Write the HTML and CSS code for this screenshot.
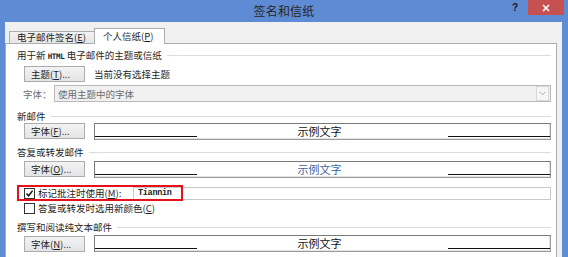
FILE: index.html
```html
<!DOCTYPE html>
<html lang="zh-CN">
<head>
<meta charset="utf-8">
<title>签名和信纸</title>
<link rel="stylesheet" href="styles.css">
</head>
<body>
<div class="titlebar">
  <div></div>
  <div class="title">签名和信纸</div>
  <div class="ctrls">
    <span class="help">?</span>
    <span class="close"><svg width="8" height="8" viewBox="0 0 8 8"><path d="M1 1L7 7M7 1L1 7" stroke="#fff" stroke-width="1.6" fill="none"/></svg></span>
  </div>
</div>
<div class="client">
  <div class="tabs">
    <div class="tab">电子邮件签名(<u>E</u>)</div>
    <div class="tab sel">个人信纸(<u>P</u>)</div>
  </div>
  <div class="panel">
    <div class="grp g1"><span>用于新 <span class="mini">HTML</span> 电子邮件的主题或信纸</span></div>
    <div class="row r-theme">
      <div class="btn">主题(<u>T</u>)...</div>
      <span class="note">当前没有选择主题</span>
    </div>
    <div class="row r-font">
      <span class="dis-label">字体：</span>
      <div class="combo"><span>使用主题中的字体</span><span class="arrow"><svg width="7" height="5" viewBox="0 0 7 5"><path d="M0.5 0.8L3.5 3.8L6.5 0.8" stroke="#a8a8a8" fill="none"/></svg></span></div>
    </div>
    <div class="grp g2"><span>新邮件</span></div>
    <div class="row r-f">
      <div class="btn">字体(<u>F</u>)...</div>
      <div class="sample"><span class="ln"></span><span class="txt">示例文字</span><span class="ln"></span></div>
    </div>
    <div class="grp g3"><span>答复或转发邮件</span></div>
    <div class="row r-o">
      <div class="btn">字体(<u>O</u>)...</div>
      <div class="sample blue"><span class="ln"></span><span class="txt">示例文字</span><span class="ln"></span></div>
    </div>
    <div class="chk-row c1">
      <span class="cb on"><svg width="9" height="9" viewBox="0 0 9 9"><path d="M1.5 4.5L3.6 6.8L7.6 1.6" stroke="#111" stroke-width="1.5" fill="none"/></svg></span>
      <span class="cb-label w1">标记批注时使用(<u>M</u>):</span>
      <div class="field">Tiannin</div>
      <span class="mark"></span>
    </div>
    <div class="chk-row c2">
      <span class="cb"></span>
      <span class="cb-label">答复或转发时选用新颜色(<u>C</u>)</span>
    </div>
    <div class="grp g4"><span>撰写和阅读纯文本邮件</span></div>
    <div class="row r-n">
      <div class="btn">字体(<u>N</u>)...</div>
      <div class="sample"><span class="ln"></span><span class="txt">示例文字</span><span class="ln"></span></div>
    </div>
  </div>
</div>
</body>
</html>
```
FILE: styles.css
```css
html, body {
  margin: 0;
  padding: 0;
}
body {
  width: 568px;
  height: 257px;
  overflow: hidden;
  background: #5e8bd3;
  font-family: "Noto Sans CJK SC", "Noto Sans", sans-serif;
  font-size: 9.5px;
  color: #1e1e1e;
}
u {
  text-decoration: underline;
  text-underline-offset: 1px;
}

/* title bar */
.titlebar {
  height: 22px;
  display: grid;
  grid-template-columns: 1fr auto 1fr;
  align-items: start;
}
.title {
  font-size: 12px;
  line-height: 22px;
  color: #262626;
  letter-spacing: 0.2px;
}
.ctrls {
  justify-self: end;
  display: flex;
  align-items: flex-start;
  margin-right: 4px;
}
.help {
  font-family: "Liberation Sans", sans-serif;
  font-weight: bold;
  font-size: 10px;
  line-height: 10px;
  margin-top: 3px;
  margin-right: 10px;
  color: #1a1a1a;
}
.close {
  width: 36px;
  height: 15px;
  background: #c75050;
  display: flex;
  align-items: center;
  justify-content: center;
}
.close svg {
  display: block;
}

/* client */
.client {
  margin: 0 6px 0 5px;
  height: 235px;
  background: #f0f0f0;
  padding: 6px 5px 0 0;
  box-sizing: border-box;
  overflow: hidden;
}
.tabs {
  display: flex;
  align-items: flex-end;
  height: 15px;
  padding-left: 4px;
  position: relative;
  z-index: 1;
}
.tab {
  box-sizing: border-box;
  height: 12px;
  width: 86px;
  border: 1px solid #acacac;
  border-bottom: none;
  background: linear-gradient(#f2f2f2, #e6e6e6);
  line-height: 11px;
  padding-left: 7px;
  white-space: nowrap;
}
.tab.sel {
  width: 71px;
  height: 16px;
  margin-left: -1px;
  margin-bottom: -1px;
  background: #fff;
  line-height: 15px;
  padding-left: 8px;
}

.panel {
  box-sizing: border-box;
  background: #fff;
  border: 1px solid #acacac;
  border-bottom: none;
  height: 214px;
  padding: 5px 5px 0 11px;
}

.grp {
  display: flex;
  align-items: center;
  height: 12px;
  white-space: nowrap;
}
.grp::after {
  content: "";
  flex: 1;
  border-top: 1px solid #dcdcdc;
  margin-left: 5px;
}
.mini {
  font-family: "DejaVu Sans Mono", monospace;
  font-size: 7.5px;
  font-weight: bold;
  letter-spacing: -0.3px;
}

.row {
  display: flex;
  align-items: center;
  margin-left: 7px;
  height: 16px;
}
.btn {
  box-sizing: border-box;
  width: 61px;
  height: 16px;
  border: 1px solid #acacac;
  background: linear-gradient(#f3f3f3, #e4e4e4);
  line-height: 14px;
  padding-left: 6px;
  white-space: nowrap;
  flex: none;
}
.note {
  margin-left: 9px;
}
.r-theme { margin-top: 5px; }
.r-font {
  margin-top: 3px;
  height: 17px;
  margin-left: 6px;
}
.dis-label {
  width: 31px;
  color: #6d6d6d;
  flex: none;
}
.combo {
  flex: 1;
  height: 17px;
  box-sizing: border-box;
  border: 1px solid #b9b9b9;
  background: #f0f0f0;
  display: flex;
  align-items: center;
  justify-content: space-between;
  padding-left: 3px;
  color: #6d6d6d;
}
.arrow {
  width: 13px;
  height: 15px;
  box-sizing: border-box;
  border: 1px solid #d9d9d9;
  background: #f6f6f6;
  margin-right: 1px;
  display: flex;
  align-items: center;
  justify-content: center;
}
.arrow svg { display: block; }

.g2 { margin-top: 8px; }
.r-f { margin-top: 1px; }
.g3 { margin-top: 7px; }
.r-o { margin-top: 3px; }
.g4 { margin-top: 7px; }
.r-n { margin-top: 2px; height: 17px; }

.sample {
  flex: 1;
  height: 17px;
  box-sizing: border-box;
  margin-left: 9px;
  border: 1px solid #7a7a7a;
  border-right-color: #9a9a9a;
  border-bottom-color: #9a9a9a;
  box-shadow: inset -1px -1px 0 #e3e3e3;
  display: flex;
  align-items: flex-start;
}
.sample .ln {
  width: 102px;
  height: 12px;
  border-bottom: 1px solid #111;
  flex: none;
}
.sample .txt {
  flex: 1;
  text-align: center;
  font-size: 11px;
  line-height: 14px;
  padding-right: 6px;
  color: #111;
}
.sample.blue .txt {
  color: #3b64a0;
}

.chk-row {
  display: flex;
  align-items: center;
  margin-left: 7px;
  height: 16px;
  position: relative;
  white-space: nowrap;
}
.c1 { margin-top: 8px; }
.c2 { margin-top: 1px; height: 12px; }
.cb {
  width: 11px;
  height: 11px;
  box-sizing: border-box;
  border: 1px solid #333;
  background: #fff;
  flex: none;
  display: flex;
  align-items: center;
  justify-content: center;
}
.cb svg { display: block; }
.cb-label {
  margin-left: 3px;
}
.cb-label.w1 {
  width: 95px;
  flex: none;
}
.field {
  flex: 1;
  height: 13px;
  box-sizing: border-box;
  border: 1px solid #c8c8c8;
  font-family: "Liberation Mono", monospace;
  font-size: 8.5px;
  font-weight: bold;
  line-height: 11px;
  padding-left: 4px;
  letter-spacing: -0.3px;
}
.mark {
  position: absolute;
  left: -7px;
  top: 0;
  width: 166px;
  height: 16px;
  box-sizing: border-box;
  border: 2px solid #e8101a;
  pointer-events: none;
}
```
